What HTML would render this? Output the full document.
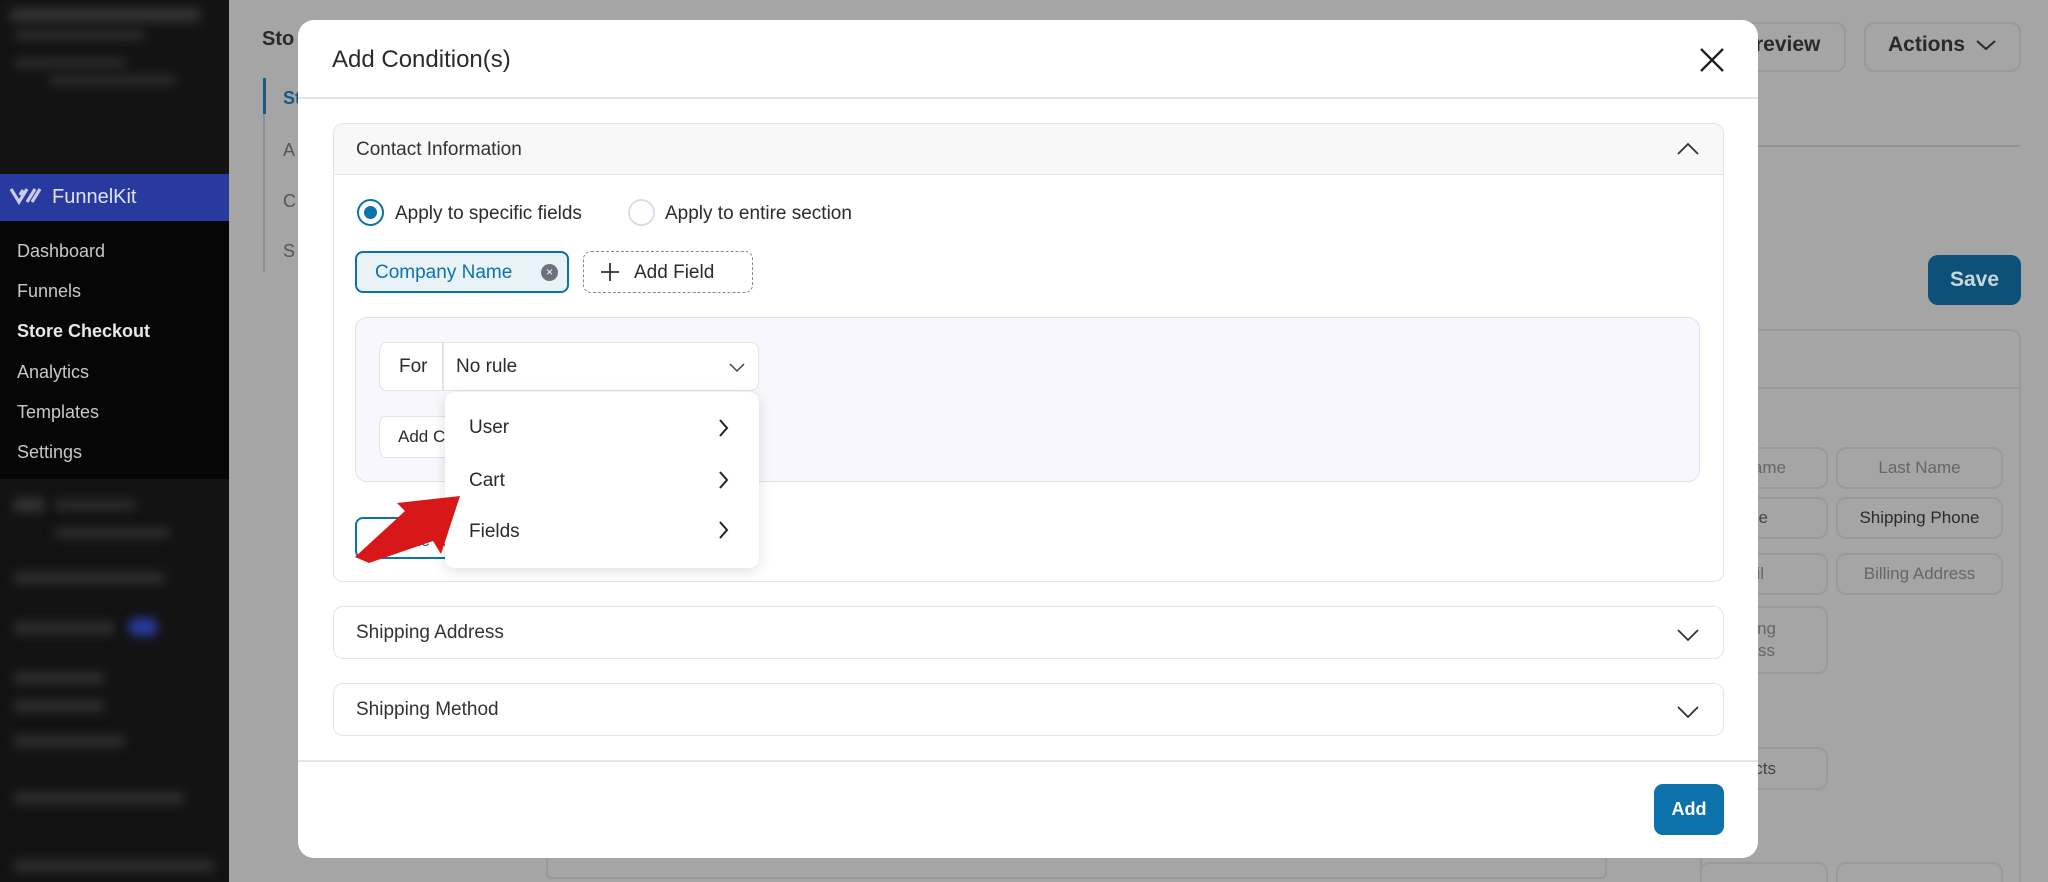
<!DOCTYPE html>
<html><head><meta charset="utf-8"><style>
*{box-sizing:border-box;margin:0;padding:0}
html{width:2048px;height:882px;overflow:hidden}
body{width:2048px;height:882px;overflow:hidden;background:#a5a5a5;font-family:"Liberation Sans",Arial,sans-serif;position:relative;color:#2b2b2b}
.a{position:absolute}
.blur{filter:blur(5px)}
.chip{position:absolute;border:2px solid #999;border-radius:10px;color:#444;font-size:17px;text-align:center;display:flex;align-items:center;justify-content:center}
.modal{position:absolute;left:298px;top:20px;width:1460px;height:838px;background:#fff;border-radius:16px;overflow:hidden}
.panel{position:absolute;left:35px;width:1391px;border:1.5px solid #e3e3ee;border-radius:10px;background:#fff}
.ph{font-size:19px;color:#333}
.dd{font-size:19px;color:#2b2b2b}
</style></head><body>
<div class="a" style="left:0;top:0;width:229px;height:882px;background:#131313"></div>
<div class="a blur" style="left:10px;top:8px;width:190px;height:14px;background:#333"></div>
<div class="a blur" style="left:15px;top:30px;width:130px;height:10px;background:#2c2c2c"></div>
<div class="a blur" style="left:15px;top:58px;width:110px;height:10px;background:#2c2c2c"></div>
<div class="a blur" style="left:50px;top:75px;width:125px;height:10px;background:#2c2c2c"></div>
<div class="a" style="left:0;top:174px;width:229px;height:47px;background:#283a9d"></div>
<svg class="a" style="left:10px;top:187px" width="32" height="18" viewBox="0 0 32 18"><path d="M1 2 L9 15 L17 2 M10 8 L13 3 M17 15 L25 2 M22 15 L30 2" stroke="#c9cde8" stroke-width="3.2" fill="none"/></svg>
<div class="a" style="left:52px;top:186px;font-size:20px;color:#dfe2f2">FunnelKit</div>
<div class="a" style="left:0;top:221px;width:229px;height:258px;background:#060606"></div>
<div class="a" style="left:17px;top:231px;font-size:18px;color:#c8c8c8;line-height:40.2px">Dashboard<br>Funnels<br><b style="color:#e8e8e8">Store Checkout</b><br>Analytics<br>Templates<br>Settings</div>
<div class="a blur" style="left:14px;top:498px;width:30px;height:14px;background:#333"></div>
<div class="a blur" style="left:55px;top:500px;width:80px;height:10px;background:#2e2e2e"></div>
<div class="a blur" style="left:55px;top:528px;width:115px;height:10px;background:#2e2e2e"></div>
<div class="a blur" style="left:14px;top:572px;width:150px;height:12px;background:#2e2e2e"></div>
<div class="a blur" style="left:14px;top:622px;width:100px;height:12px;background:#2e2e2e"></div>
<div class="a blur" style="left:128px;top:618px;width:30px;height:18px;background:#283a9d;border-radius:9px"></div>
<div class="a blur" style="left:14px;top:672px;width:90px;height:12px;background:#2e2e2e"></div>
<div class="a blur" style="left:14px;top:700px;width:90px;height:12px;background:#2e2e2e"></div>
<div class="a blur" style="left:14px;top:735px;width:110px;height:12px;background:#2e2e2e"></div>
<div class="a blur" style="left:14px;top:792px;width:170px;height:12px;background:#2e2e2e"></div>
<div class="a blur" style="left:14px;top:860px;width:200px;height:12px;background:#2e2e2e"></div>
<div class="a" style="left:262px;top:28px;font-size:20px;font-weight:bold;color:#2a2a2a">Sto</div>
<div class="a" style="left:263px;top:78px;width:2px;height:194px;background:#8e8e98"></div>
<div class="a" style="left:263px;top:78px;width:3px;height:36px;background:#165a82"></div>
<div class="a" style="left:283px;top:88px;font-size:18px;font-weight:bold;color:#165a82">St</div>
<div class="a" style="left:283px;top:140px;font-size:18px;color:#555">A</div>
<div class="a" style="left:283px;top:191px;font-size:18px;color:#555">C</div>
<div class="a" style="left:283px;top:241px;font-size:18px;color:#555">S</div>
<div class="a" style="left:1700px;top:22px;width:146px;height:50px;border:2px solid #999;border-radius:10px"></div>
<div class="a" style="left:1755px;top:33px;font-size:21px;font-weight:bold;color:#2a2a2a">review</div>
<div class="a" style="left:1864px;top:22px;width:157px;height:50px;border:2px solid #999;border-radius:10px"></div>
<div class="a" style="left:1888px;top:33px;font-size:21px;font-weight:bold;color:#2a2a2a">Actions</div>
<svg class="a" style="left:1975px;top:38px" width="22" height="14"><path d="M2 3 L11 11 L20 3" stroke="#2a2a2a" stroke-width="2" fill="none"/></svg>
<div class="a" style="left:1758px;top:145px;width:262px;height:1.5px;background:#939393"></div>
<div class="a" style="left:1928px;top:255px;width:93px;height:50px;background:#0b5178;border-radius:10px;color:#c9d5dc;font-size:21px;font-weight:bold;text-align:center;line-height:50px">Save</div>
<div class="a" style="left:1700px;top:329px;width:321px;height:553px;border:2px solid #999;border-bottom:none;border-radius:10px 10px 0 0"></div>
<div class="a" style="left:1758px;top:387px;width:262px;height:1.5px;background:#999"></div>
<div class="chip" style="left:1700px;top:447px;width:128px;height:42px;justify-content:flex-end;padding-right:40px;color:#666">ame</div>
<div class="chip" style="left:1836px;top:447px;width:167px;height:42px;color:#666">Last Name</div>
<div class="chip" style="left:1700px;top:497px;width:128px;height:42px;justify-content:flex-end;padding-right:58px">e</div>
<div class="chip" style="left:1836px;top:497px;width:167px;height:42px;color:#2a2a2a">Shipping Phone</div>
<div class="chip" style="left:1700px;top:553px;width:128px;height:42px;justify-content:flex-end;padding-right:62px;color:#666">il</div>
<div class="chip" style="left:1836px;top:553px;width:167px;height:42px;color:#666">Billing Address</div>
<div class="chip" style="left:1700px;top:606px;width:128px;height:68px;justify-content:flex-end;padding-right:50px;color:#666;line-height:22px">ng<br>ss</div>
<div class="chip" style="left:1700px;top:747px;width:128px;height:43px;justify-content:flex-end;padding-right:50px;color:#444">cts</div>
<div class="a" style="left:1700px;top:862px;width:128px;height:20px;border:2px solid #999;border-bottom:none;border-radius:10px 10px 0 0"></div>
<div class="a" style="left:1836px;top:862px;width:167px;height:20px;border:2px solid #999;border-bottom:none;border-radius:10px 10px 0 0"></div>
<div class="a" style="left:546px;top:849px;width:1061px;height:30px;border:2px solid #999;border-radius:6px"></div>
<div class="modal">
  <div class="a" style="left:34px;top:26px;font-size:24px;color:#2b2b2b">Add Condition(s)</div>
  <svg class="a" style="left:1400px;top:26px" width="28" height="28"><path d="M3 3 L25 25 M25 3 L3 25" stroke="#222" stroke-width="2.4"/></svg>
  <div class="a" style="left:0;top:77px;width:1460px;height:1.5px;background:#e4e4ee"></div>
  <div class="panel" style="top:103px;height:459px">
    <div class="a" style="left:0;top:0;width:100%;height:51px;background:#f8f8f8;border-bottom:1.5px solid #e3e3ee;border-radius:10px 10px 0 0"></div>
    <div class="a ph" style="left:22px;top:15px">Contact Information</div>
    <svg class="a" style="left:1342px;top:17px" width="24" height="16"><path d="M2 13 L12 3 L22 13" stroke="#333" stroke-width="1.8" fill="none"/></svg>
    <div class="a" style="left:23px;top:75px;width:27px;height:27px;border-radius:50%;border:2.5px solid #0b72ab"></div>
    <div class="a" style="left:30px;top:82px;width:13px;height:13px;border-radius:50%;background:#0b72ab"></div>
    <div class="a dd" style="left:61px;top:79px">Apply to specific fields</div>
    <div class="a" style="left:294px;top:75px;width:27px;height:27px;border-radius:50%;border:2px solid #dcdce8"></div>
    <div class="a dd" style="left:331px;top:79px">Apply to entire section</div>
    <div class="a" style="left:21px;top:127px;width:214px;height:42px;border:2px solid #0b72ab;border-radius:8px;background:#e8f2f7"></div>
    <div class="a" style="left:41px;top:138px;font-size:19px;color:#0b72ab">Company Name</div>
    <div class="a" style="left:207px;top:140px;width:17px;height:17px;border-radius:50%;background:#6e7080;color:#fff;font-size:12px;line-height:17px;text-align:center">×</div>
    <div class="a" style="left:249px;top:127px;width:170px;height:42px;border:1.5px dashed #888;border-radius:8px"></div>
    <svg class="a" style="left:266px;top:138px" width="20" height="20"><path d="M10 1 V19 M1 10 H19" stroke="#333" stroke-width="1.8"/></svg>
    <div class="a" style="left:300px;top:138px;font-size:19px;color:#2b2b2b">Add Field</div>
    <div class="a" style="left:21px;top:193px;width:1345px;height:165px;background:#f7f7fd;border:1.5px solid #e0e0ee;border-radius:12px"></div>
    <div class="a" style="left:45px;top:218px;width:380px;height:49px;background:#fff;border:1.5px solid #e3e3ee;border-radius:8px"></div>
    <div class="a" style="left:108px;top:219px;width:1.5px;height:47px;background:#e3e3ee"></div>
    <div class="a dd" style="left:65px;top:232px">For</div>
    <div class="a dd" style="left:122px;top:232px">No rule</div>
    <svg class="a" style="left:394px;top:238px" width="18" height="12"><path d="M2 2 L9 9 L16 2" stroke="#444" stroke-width="1.5" fill="none"/></svg>
    <div class="a" style="left:45px;top:292px;width:120px;height:42px;background:#fff;border:1.5px solid #e3e3ee;border-radius:8px"></div>
    <div class="a" style="left:64px;top:303px;font-size:17px">Add C</div>
    <div class="a" style="left:21px;top:393px;width:110px;height:42px;border:2px solid #0b72ab;border-radius:8px"></div>
    <div class="a" style="left:45px;top:407px;font-size:17px;color:#0b72ab">Create R</div>
  </div>
  <div class="a" style="left:147px;top:372px;width:314px;height:176px;background:#fff;border-radius:10px;box-shadow:0 3px 14px rgba(0,0,0,.13)"></div>
  <div class="a dd" style="left:171px;top:397px">User</div>
  <div class="a dd" style="left:171px;top:450px">Cart</div>
  <div class="a dd" style="left:171px;top:501px">Fields</div>
  <svg class="a" style="left:420px;top:398px" width="12" height="124"><path d="M2 2 L9 10 L2 18 M2 54 L9 62 L2 70 M2 104 L9 112 L2 120" stroke="#222" stroke-width="2" fill="none"/></svg>
  <svg class="a" style="left:55px;top:455px" width="110" height="90"><path d="M2 82 L52 36 L44 28 L107 21 L88 79 L80 66 L16 88 Z" fill="#d81818"/></svg>
  <div class="panel" style="top:586px;height:53px"><div class="a ph" style="left:22px;top:15px">Shipping Address</div>
    <svg class="a" style="left:1342px;top:20px" width="24" height="16"><path d="M2 3 L12 13 L22 3" stroke="#333" stroke-width="1.8" fill="none"/></svg></div>
  <div class="panel" style="top:663px;height:53px"><div class="a ph" style="left:22px;top:15px">Shipping Method</div>
    <svg class="a" style="left:1342px;top:20px" width="24" height="16"><path d="M2 3 L12 13 L22 3" stroke="#333" stroke-width="1.8" fill="none"/></svg></div>
  <div class="a" style="left:0;top:740px;width:1460px;height:1.5px;background:#e4e4ee"></div>
  <div class="a" style="left:1356px;top:764px;width:70px;height:51px;background:#0b72ab;border-radius:9px;color:#fff;font-size:18px;font-weight:bold;text-align:center;line-height:51px">Add</div>
</div>
</body></html>
